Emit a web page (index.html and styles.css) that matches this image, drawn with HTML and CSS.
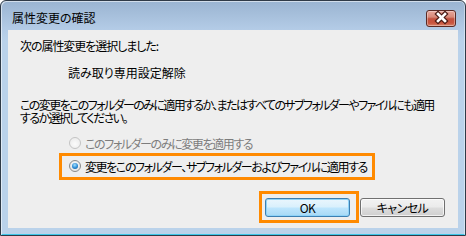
FILE: index.html
```html
<!DOCTYPE html>
<html lang="ja">
<head>
<meta charset="utf-8">
<title>属性変更の確認</title>
<link rel="stylesheet" href="styles.css">
</head>
<body>
<div class="window">
  <div class="titlebar">
    <span class="title">属性変更の確認</span>
    <button class="close" type="button" aria-label="閉じる">
      <svg width="30" height="17" viewBox="0 0 30 17">
        <path d="M12 4 L19 11 M19 4 L12 11" stroke="#4a1a14" stroke-width="5" stroke-linecap="square" fill="none"/>
        <path d="M12 4 L19 11 M19 4 L12 11" stroke="#ffffff" stroke-width="2.6" stroke-linecap="square" fill="none"/>
      </svg>
    </button>
  </div>
  <div class="client">
    <p class="line intro">次の属性変更を選択しました:</p>
    <p class="line attr">読み取り専用設定解除</p>
    <div class="para">
      <p class="pline">この変更をこのフォルダーのみに適用するか、またはすべてのサブフォルダーやファイルにも適用</p>
      <p class="pline">するか選択してください。</p>
    </div>
    <div class="options">
      <div class="opt disabled"><span class="radio"></span><span class="opt-text">このフォルダーのみに変更を適用する</span></div>
      <div class="hl hl-opt">
        <div class="opt"><span class="radio checked"></span><span class="opt-text">変更をこのフォルダー、サブフォルダーおよびファイルに適用する</span></div>
      </div>
    </div>
    <div class="buttons">
      <div class="hl hl-btn"><button class="btn default" type="button">OK</button></div>
      <button class="btn" type="button">キャンセル</button>
    </div>
  </div>
</div>
</body>
</html>
```

FILE: styles.css
```css
* { box-sizing: border-box; }
html, body { margin: 0; padding: 0; }
body {
  width: 466px;
  height: 236px;
  background: #ffffff;
  font-family: "Noto Sans CJK JP", "Noto Sans", sans-serif;
  font-size: 12px;
  color: #000;
  overflow: hidden;
}
.window {
  width: 466px;
  height: 236px;
  border: 1px solid #2f3a47;
  border-radius: 6px 6px 0 0;
  background: linear-gradient(#9ab4d1 0px, #b3cbe6 28px, #bad2ea 40px, #bad2ea 100%);
  box-shadow: inset 1px 1px 0 rgba(255,255,255,0.55), inset -1px 0 0 rgba(255,255,255,0.4), inset 0 -1px 0 #3cc6e8;
  display: flex;
  flex-direction: column;
}
.titlebar {
  height: 29px;
  display: flex;
  align-items: flex-start;
  justify-content: space-between;
}
.title {
  margin: 9px 0 0 11px;
  font-size: 12px;
  line-height: 16px;
  font-feature-settings: "palt";
  color: #000;
}
.close {
  margin: 9px 9px 0 0;
  width: 30px;
  height: 17px;
  padding: 0;
  border: 1px solid #5b2a24;
  border-radius: 3px;
  background: linear-gradient(#e8a79b 0%, #d88a7a 40%, #c2513e 52%, #c9553f 80%, #d7836a 100%);
  box-shadow: inset 0 0 0 1px rgba(255,255,255,0.35);
  display: flex;
  align-items: center;
  justify-content: center;
}
.close svg { display: block; margin: -1px; }
.client {
  margin-left: 7px;
  width: 450px;
  height: 198px;
  background: #eeeeee;
  padding: 9px 0 0 12px;
  display: flex;
  flex-direction: column;
  font-feature-settings: "palt";
}
.line, .pline { margin: 0; }
.line { line-height: 14px; height: 14px; white-space: nowrap; }
.intro { letter-spacing: -1.05px; }
.attr { margin-top: 13px; padding-left: 48px; }
.para { margin-top: 18px; display: flex; flex-direction: column; }
.pline {
  height: 13px;
  line-height: 13px;
  white-space: nowrap;
  letter-spacing: -1.6px;
}
.options { margin-top: 11px; display: flex; flex-direction: column; }
.opt {
  display: flex;
  align-items: center;
  gap: 4px;
  height: 16px;
  white-space: nowrap;
}
.opt-text { letter-spacing: -1.4px; }
.opt.disabled { margin-left: 49px; color: #7d7d7d; }
.radio {
  width: 12px;
  height: 12px;
  border-radius: 50%;
  border: 1px solid #c4c4c4;
  background: radial-gradient(circle at 50% 60%, #fbfbfb 0%, #e8e8e8 100%);
  display: flex;
  align-items: center;
  justify-content: center;
  flex: none;
}
.radio.checked {
  border-color: #8a8a8a;
  background: radial-gradient(circle at 50% 40%, #ffffff 0%, #dcdcdc 100%);
}
.radio.checked::after {
  content: "";
  width: 6px;
  height: 6px;
  border-radius: 50%;
  background: radial-gradient(circle at 45% 35%, #a6e0ff 0%, #2a8ad4 55%, #0f4f8c 100%);
}
.hl { border: 3px solid #ff8a00; }
.hl-opt {
  margin: 2px 0 0 39px;
  width: 316px;
  height: 27px;
  padding: 2px 0 3px 7px;
  display: flex;
  align-items: center;
}
.buttons {
  margin-top: 11px;
  padding-right: 13px;
  display: flex;
  justify-content: flex-end;
  align-items: flex-start;
  gap: 1px;
}
.hl-btn {
  width: 100px;
  height: 32px;
  padding: 4px 6px 3px 3px;
}
.btn {
  width: 85px;
  height: 19px;
  padding: 0;
  border: 1px solid #707070;
  border-radius: 3px;
  background: linear-gradient(#f2f2f2 0%, #ebebeb 48%, #dddddd 52%, #cfcfcf 100%);
  box-shadow: inset 0 0 0 1px rgba(255,255,255,0.7);
  font-family: "Noto Sans CJK JP", "Noto Sans", sans-serif;
  font-feature-settings: "palt";
  font-size: 12px;
  line-height: 15px;
  letter-spacing: -0.5px;
  color: #000;
}
.buttons > .btn { margin-top: 7px; }
.btn.default {
  border-color: #3c7fb1;
  background: linear-gradient(#eaf6fd 0%, #d9f0fc 48%, #bee6fd 52%, #a7d9f5 100%);
  box-shadow: inset 0 0 0 1px #8fd3f8;
}
```
